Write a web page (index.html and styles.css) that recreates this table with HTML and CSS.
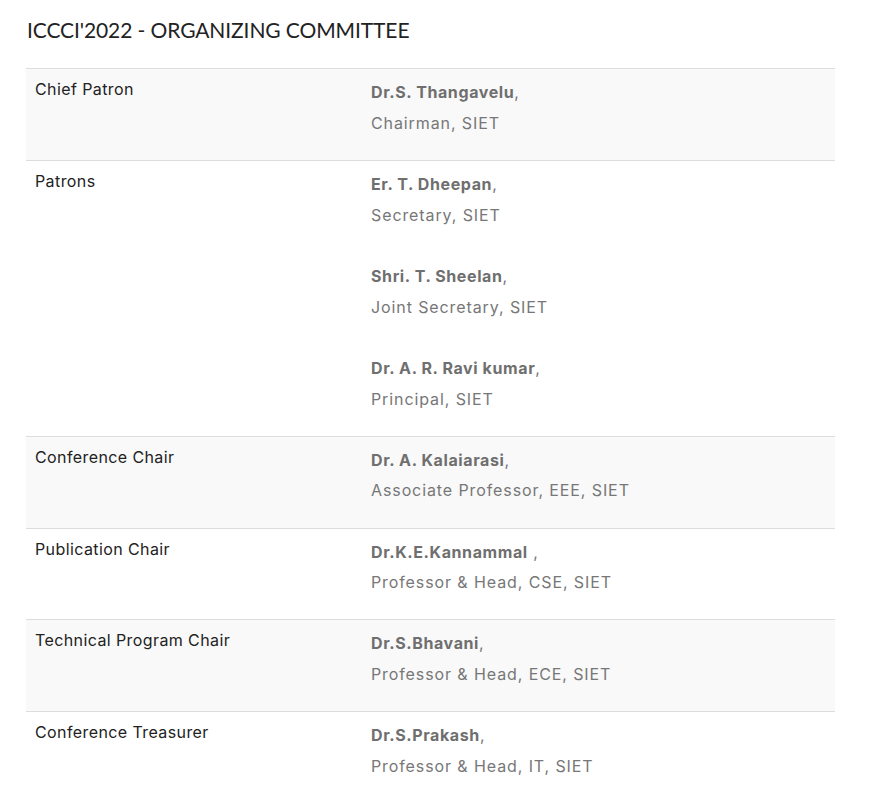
FILE: index.html
```html
<!DOCTYPE html>
<html>
<head>
<meta charset="utf-8">
<link rel="stylesheet" href="styles.css">
</head>
<body>
<div class="page">
  <h2 class="title">ICCCI'2022 - ORGANIZING COMMITTEE</h2>
  <table class="committee">
    <tr>
      <td class="role">Chief Patron</td>
      <td class="members"><p><strong>Dr.S. Thangavelu</strong>,<br>Chairman, SIET</p></td>
    </tr>
    <tr>
      <td class="role">Patrons</td>
      <td class="members"><p><strong>Er. T. Dheepan</strong>,<br>Secretary, SIET<br><br><strong>Shri. T. Sheelan</strong>,<br>Joint Secretary, SIET<br><br><strong>Dr. A. R. Ravi kumar</strong>,<br>Principal, SIET</p></td>
    </tr>
    <tr>
      <td class="role">Conference Chair</td>
      <td class="members"><p><strong>Dr. A. Kalaiarasi</strong>,<br>Associate Professor, EEE, SIET</p></td>
    </tr>
    <tr>
      <td class="role">Publication Chair</td>
      <td class="members"><p><strong>Dr.K.E.Kannammal</strong> ,<br>Professor &amp; Head, CSE, SIET</p></td>
    </tr>
    <tr>
      <td class="role">Technical Program Chair</td>
      <td class="members"><p><strong>Dr.S.Bhavani</strong>,<br>Professor &amp; Head, ECE, SIET</p></td>
    </tr>
    <tr>
      <td class="role">Conference Treasurer</td>
      <td class="members"><p><strong>Dr.S.Prakash</strong>,<br>Professor &amp; Head, IT, SIET</p></td>
    </tr>
  </table>
</div>
</body>
</html>
```
FILE: styles.css
```css
html, body {
  margin: 0;
  padding: 0;
  background: #fff;
}
.page {
  padding: 16px 46px 0 26px;
  font-family: "Inter", "Liberation Sans", sans-serif;
}
.title {
  margin: 0 0 24px 1px;
  font-family: "Lato", "Inter", sans-serif;
  font-weight: 400;
  font-size: 21px;
  line-height: 28px;
  letter-spacing: -0.1px;
  color: #222;
}
.committee {
  width: 809px;
  border-collapse: collapse;
  border-spacing: 0;
}
.committee tr {
  border-top: 1px solid #ddd;
}
.committee tr:nth-child(odd) {
  background: #f9f9f9;
}
.committee td {
  vertical-align: top;
  padding: 8px 9px;
}
.role {
  width: 318px;
  font-size: 16px;
  line-height: 25px;
  letter-spacing: 0.4px;
  color: #222;
}
.members {
  font-size: 16px;
  line-height: 30.67px;
  letter-spacing: 0.9px;
  color: #777;
  padding-left: 8px;
}
.members p {
  margin: 0 0 13.5px;
}
.members strong {
  font-weight: 700;
  letter-spacing: 0.6px;
  color: #6f6f6f;
}
```
